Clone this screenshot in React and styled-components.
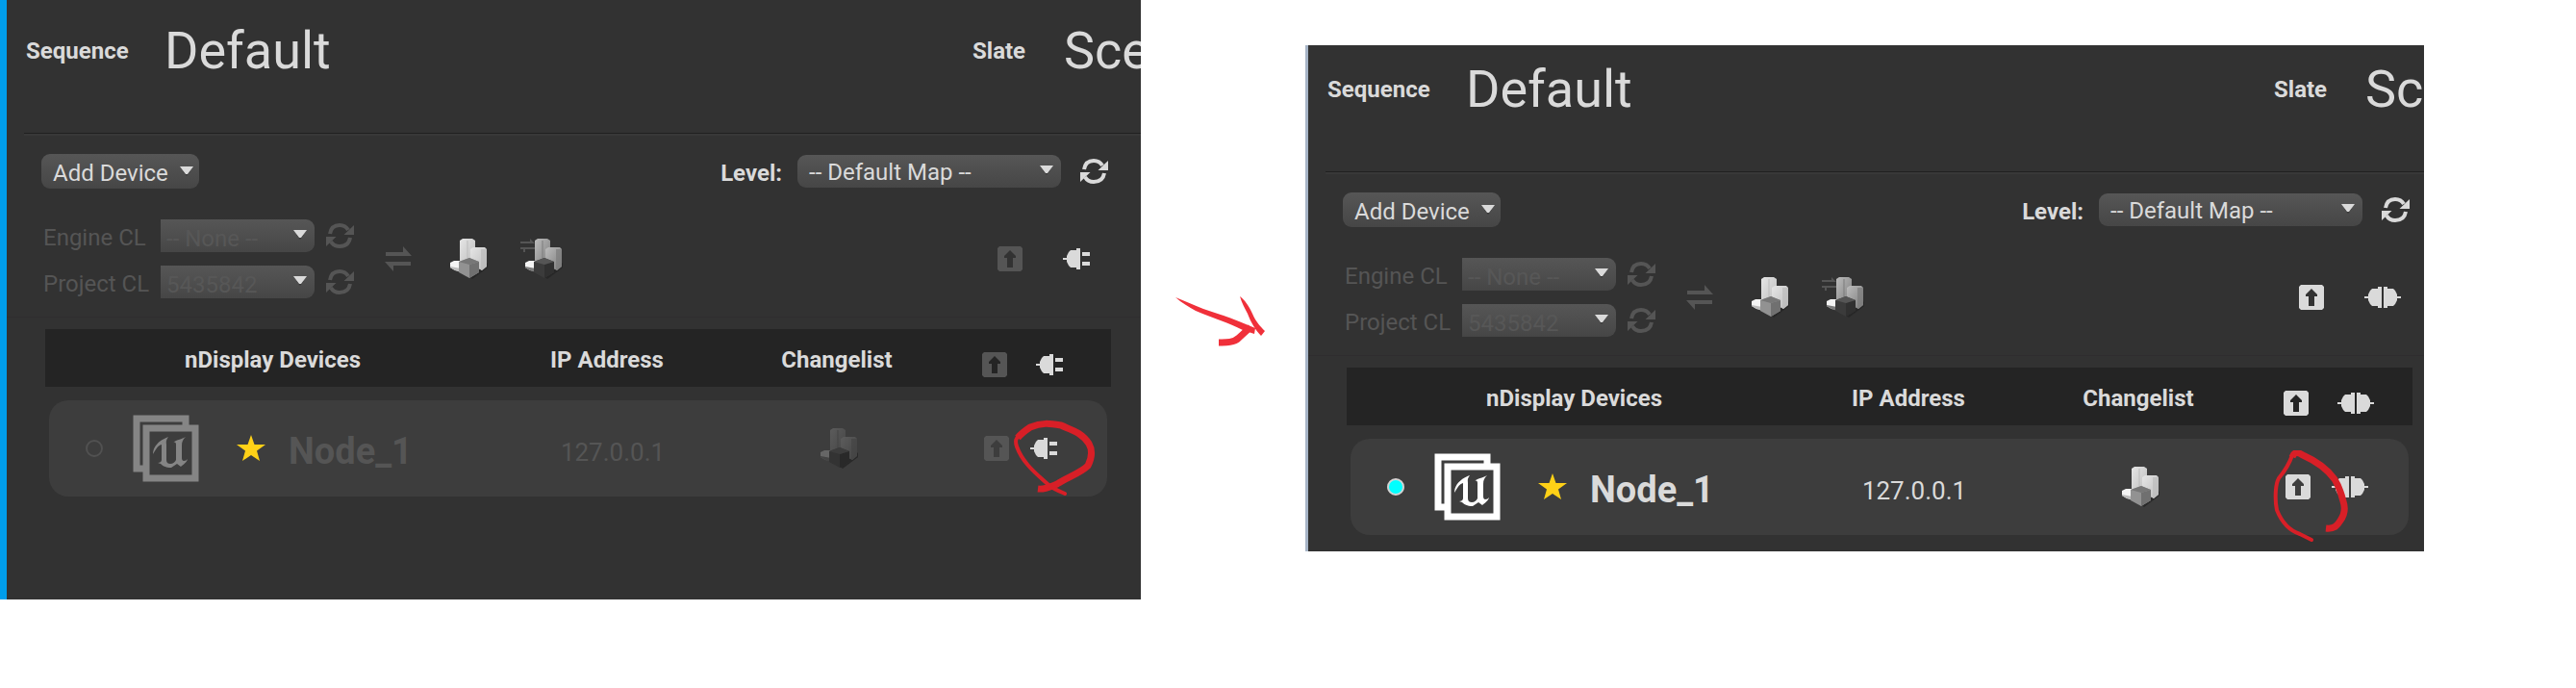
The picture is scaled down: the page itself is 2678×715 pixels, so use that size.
import React, { useId } from "react";
import styled, { createGlobalStyle } from "styled-components";

const GlobalStyle = createGlobalStyle`
  * { box-sizing: border-box; }
  body {
    margin: 0;
    background: #fff;
    font-family: Roboto, "Liberation Sans", sans-serif;
    font-size: 24px;
    color: #dadada;
  }
`;

const Page = styled.main`
  display: grid;
  grid-template-columns: 1186fr 171fr 1163fr 158fr;
  align-items: start;
`;

const Panel = styled.section`
  margin-top: ${(p) => (p.$lowered ? 40 : 0)}px;
  clip-path: inset(${(p) => (p.$lowered ? 7 : 0)}px 0 0 0);
  border-left: ${(p) => (p.$lowered ? "3px solid #a6b4c6" : "7px solid #009deb")};
  background: #323232;
  overflow: hidden;
`;

const Body = styled.div`
  margin-right: ${(p) => (p.$cropped ? -19 : 0)}px;
  padding-bottom: ${(p) => (p.$cropped ? 17 : 107)}px;
`;

const TopBar = styled.header`
  display: flex;
  margin-left: 18px;
  height: 141px;
  border-bottom: 2px solid #383838;
  box-shadow: inset 0 -1px #202020;
`;

const Field = styled.div`
  display: flex;
  align-items: center;
  height: 106px;
  padding-left: 2px;
  flex: ${(p) => (p.$end ? "0 0 177px" : "1 1 0")};
  min-width: 0;
`;

const FieldLabel = styled.label`
  flex: none;
  width: ${(p) => (p.$short ? 95 : 144)}px;
  font-weight: 700;
  line-height: 30px;
`;

const FieldInput = styled.input`
  flex: 1;
  width: 0;
  height: 72px;
  padding: 0;
  border: 0;
  background: none;
  color: inherit;
  font: 400 54px/72px Roboto, "Liberation Sans", sans-serif;
`;

const LevelBar = styled.div`
  display: flex;
  align-items: flex-start;
  padding: 19px 34px 0 36px;
`;

const AddButton = styled.button`
  display: flex;
  align-items: center;
  gap: 12px;
  height: 36px;
  padding: 4px 6px 0 12px;
  border: 0;
  border-radius: 9px;
  background: linear-gradient(#565656, #464646);
  color: inherit;
  font: inherit;
  line-height: 30px;
  white-space: nowrap;

  svg { margin-bottom: 4px; }
`;

const LevelGroup = styled.div`
  display: flex;
  align-items: center;
  height: 36px;
  margin-left: auto;
`;

const LevelLabel = styled.label`
  margin: 4px 16px 0 0;
  font-weight: 700;
`;

const SelectFrame = styled.span`
  display: grid;
  align-items: center;
  width: ${(p) => p.$width}px;
  height: 34px;
  border-radius: ${(p) => (p.$joined ? "0 9px 9px 0" : "9px")};
  background: linear-gradient(#565656, #464646);

  > * { grid-area: 1 / 1; }
  > svg { justify-self: end; margin: 0 8px 2px 0; }
`;

const SelectBox = styled.select`
  appearance: none;
  width: 100%;
  height: 34px;
  padding: ${(p) => (p.$joined ? "6px 28px 0 6px" : "2px 32px 0 12px")};
  border: 0;
  background: none;
  color: ${(p) => (p.$joined ? "#575757" : "#dadada")};
  font: inherit;
  opacity: 1;
`;

const IconButton = styled.button`
  position: relative;
  display: block;
  flex: none;
  width: ${(p) => p.$slot || "auto"};
  padding: 0;
  border: 0;
  background: none;
  color: ${(p) => (p.$dim ? "#555" : "#dadada")};

  svg { display: block; }
`;

const SyncBar = styled.div`
  display: flex;
  align-items: center;
  padding: 32px 43px 19px 38px;
  border-bottom: 1px solid #2f2d2f;
`;

const ChangelistGrid = styled.div`
  display: grid;
  grid-template-columns: 122px 160px 28px;
  row-gap: 14px;
  align-items: center;

  > button { margin-left: 12px; }
`;

const DimLabel = styled.label`
  padding-top: 4px;
  color: #555;
  line-height: 30px;
  white-space: nowrap;
`;

const SyncIcons = styled.div`
  display: flex;
  align-items: center;
  margin-left: 45px;

  > :nth-child(2) { margin: 0 34px 0 39px; }
`;

const Toggles = styled.div`
  display: flex;
  align-items: center;
  gap: ${(p) => p.$gap}px;
  margin-left: ${(p) => p.$left || "0"};
`;

const DeviceTable = styled.table`
  display: block;
  margin: 12px 31px 0 40px;

  thead, tbody { display: block; }
`;

const HeadRow = styled.tr`
  display: grid;
  grid-template-columns: 473fr 222fr 256fr 157fr;
  align-items: center;
  height: 60px;
  background: #242424;
`;

const DeviceRow = styled.tr`
  display: grid;
  grid-template-columns: 471fr 230fr 242fr 157fr;
  align-items: center;
  height: 100px;
  margin: 14px 4px 0;
  border-radius: 20px;
  background: #3d3d3d;
  color: ${(p) => (p.$on ? "#dadada" : "#555")};
`;

const HeadCell = styled.th`
  padding: 4px 0 0;
  font-weight: 700;
  text-align: center;
  white-space: nowrap;
`;

const ToggleHead = styled.th`
  padding: 14px 0 0 23px;
`;

const Cell = styled.td`
  display: flex;
  align-items: center;
  justify-content: ${(p) => (p.$left ? "flex-start" : "center")};
  padding: 0 0 0 ${(p) => p.$left || "0"};
`;

const Status = styled.span`
  width: 18px;
  height: 18px;
  border-radius: 50%;
  border: 2px solid ${(p) => (p.$on ? "#d2d2d2" : "#515151")};
  background: ${(p) => (p.$on ? "#00ffff" : "transparent")};
`;

const Logo = styled.svg`
  margin: 0 39px 0 30px;
  color: ${(p) => (p.$on ? "#fff" : "#858585")};
`;

const NodeName = styled.strong`
  margin-left: 24px;
  padding-top: 6px;
  font-size: 38px;
  line-height: 48px;
`;

const Address = styled.span`
  padding-top: 8px;
  font-size: 26px;
`;

const Scribble = styled.svg`
  position: absolute;
  z-index: 1;
  left: ${(p) => p.$x}px;
  top: ${(p) => p.$y}px;
  pointer-events: none;
`;

const ArrowGap = styled.div`
  display: flex;
  justify-content: center;
  padding: 308px 2px 0 0;
`;

const Caret = () => (
  <svg width="14" height="10" viewBox="0 0 14 10" aria-hidden="true">
    <path d="M3 5h8L7 10z" fill="#333" opacity=".7" />
    <path d="M0 0h14L8 8H6z" fill="#dadada" />
  </svg>
);

const RefreshIcon = () => (
  <svg width="29" height="28" viewBox="0 0 29 28" fill="none" aria-hidden="true">
    <path d="M4 12C5 6 8 3 14 3c4 0 7 1.500 9 5M25 16c-1 6-5 9-11 9-4 0-7-1.500-9-5" stroke="currentColor" strokeWidth="4" />
    <path d="M29 3v10H18.500zM0 25V15h10.500z" fill="currentColor" />
  </svg>
);

const SwapIcon = () => (
  <svg width="28" height="26" viewBox="0 0 28 26" fill="currentColor" aria-hidden="true">
    <path d="M1 6h18V0l9 10H1zM27 20H9v6L0 16h27z" />
  </svg>
);

const BoxesIcon = ({ tone = "bright", swap }) => {
  const id = useId();
  const [hi, lo, cubeTop, cubeL, cubeR] = {
    bright: ["#e6e6e6", "#bcbcbc", "#777", "#929292", "#707070"],
    mid: ["#bcbcbc", "#7c7c7c", "#555", "#3b3b3b", "#303030"],
    dark: ["#5c5c5c", "#444", "#3c3c3c", "#333", "#292929"],
  }[tone];
  const ball = tone === "dark" ? "#666" : "#f4f4f4";
  return (
    <svg width={swap ? 46 : 42} height="44" viewBox={swap ? "-4 0 46 44" : "0 0 42 44"} aria-hidden="true">
      <defs>
        <linearGradient id={id} x1="0" x2="1" y1="0" y2="1">
          <stop offset="0" stopColor={hi} />
          <stop offset="1" stopColor={lo} />
        </linearGradient>
      </defs>
      {swap && <path d="M-4 4H6V1l5 5H-4zM12 10H-4v2h3v3h2v-3h11z" fill="#555" />}
      <path d="M36 24l4 3v4l-16 12-4-3z" fill="#242424" opacity=".8" />
      <path d="M11 3l3-2h10l3 2v27H11z" fill={`url(#${id})`} />
      <path d="M18 3h2v24h-2z" fill={lo} opacity=".5" />
      <path d="M22 12l3-2h12l2 2v18l-5 4-12-6z" fill={`url(#${id})`} />
      <path d="M33 12h6v18l-5 4h-1z" fill={lo} opacity=".7" />
      <path d="M1 26l4-2h7v11l-6-1-5-3z" fill={ball} />
      <path d="M1 30l11 2v4l-6-2-5-3z" fill={lo} />
      <path d="M10 25l11-4 10 4v11l-10 6-11-6z" fill={cubeL} />
      <path d="M21 28l10-3v11l-10 6z" fill={cubeR} />
      <path d="M10 25l11-4 10 4-10 3z" fill={cubeTop} />
    </svg>
  );
};

const UpIcon = () => (
  <svg width="26" height="26" viewBox="0 0 26 26" aria-hidden="true">
    <path fill="currentColor" fillRule="evenodd" d="M2 0h22l2 2v22l-2 2H2l-2-2V2zM13 4l-6 6v2h3v10h6V12h3v-2z" />
  </svg>
);

const PlugIcon = ({ on }) => (
  <svg width={on ? 38 : 28} height="22" viewBox={on ? "0 0 38 22" : "0 0 28 22"} fill="currentColor" aria-hidden="true">
    <path d="M18 0v22h-4v-2H8l-2-2-2-4v-2H0v-2h4V8l2-4 2-2h6V0z" />
    {on ? (
      <path d="M20 0v22h4v-2h6l2-2 2-4v-2h4v-2h-4V8l-2-4-2-2h-6V0z" />
    ) : (
      <path d="M20 4h8v4h-8zM20 14h8v4h-8z" />
    )}
  </svg>
);

const StarIcon = () => (
  <svg width="30" height="28" viewBox="0 0 30 28" aria-hidden="true">
    <path d="M15 0l3.500 10H30l-9 6.500L24 27l-9-6-9 6 3-10.500L0 10h11.500z" fill="#ffd117" />
  </svg>
);

const DisplayLogo = ({ on }) => (
  <Logo $on={on} width="70" height="70" viewBox="0 0 70 70" fill="none" aria-hidden="true">
    <path d="M56 11V4H5v52h9" stroke="currentColor" strokeWidth="7" />
    <path d="M15 14h51v52H15z" stroke="currentColor" strokeWidth="7" />
    <path
      d="M22 41c0-7 5-14 16-18-3 4-2 6-2 8v16c0 3 2 4 4 4 3 0 5-2 6-4V31c0-2-1-3-3-2 3-3 8-3 13-6-3 3-4 5-4 9v13c0 2 1 3 2 3 2 0 3-1 4-2-1 4-5 6-7 8l-4-3-6 4c-6 0-9-2-11-4l-3-1c2 0 4-1 4-3V31c-4 1-6 5-9 10z"
      fill="currentColor"
    />
  </Logo>
);

const PlugScribble = () => (
  <Scribble $x={-21} $y={-21} width="96" height="90" viewBox="0 0 96 90" fill="none" stroke="#d81f27" aria-hidden="true">
    <path d="M29 74c8 1 15-3 20-5 10-7 24-11 32-19 4-8 5-16 1-23-8-12-18-14-29-19-12-2-20-3-32 2-6 4-9 6-13 11" strokeWidth="7" />
    <path d="M11 17c-5 4-6 7-4 13 6 17 20 28 32 39 5 5 10 6 18 10" strokeWidth="4" strokeLinecap="round" />
  </Scribble>
);

const UpScribble = () => (
  <Scribble $x={-14} $y={-25} width="84" height="98" viewBox="0 0 84 98" fill="none" stroke="#d81f27" aria-hidden="true">
    <path d="M56 81c9 1 12-3 15-8 5-7 5-14 3-20-2-8-4-15-9-23C55 16 41 9 32 5c-6-4-9-3-11 2" strokeWidth="7" />
    <path d="M21 5c-4 12-9 18-14 24-4 7-4 24-2 33 6 15 15 22 24 25l12 6" strokeWidth="4" strokeLinecap="round" />
  </Scribble>
);

const Chooser = ({ id, width, joined, value }) => (
  <SelectFrame $width={width} $joined={joined}>
    <SelectBox id={id} $joined={joined} disabled={joined}>
      <option>{value}</option>
    </SelectBox>
    <Caret />
  </SelectFrame>
);

function Switchboard({ connected, slate }) {
  const id = useId();
  return (
    <Panel $lowered={connected}>
      <Body $cropped={connected}>
        <TopBar>
          <Field>
            <FieldLabel htmlFor={id + "seq"}>Sequence</FieldLabel>
            <FieldInput id={id + "seq"} defaultValue="Default" />
          </Field>
          <Field $end>
            <FieldLabel $short htmlFor={id + "slate"}>Slate</FieldLabel>
            <FieldInput id={id + "slate"} defaultValue={slate} />
          </Field>
        </TopBar>
        <LevelBar>
          <AddButton>Add Device<Caret /></AddButton>
          <LevelGroup>
            <LevelLabel htmlFor={id + "level"}>Level:</LevelLabel>
            <Chooser id={id + "level"} width={274} value="-- Default Map --" />
            <Toggles $left="20px"><IconButton aria-label="Refresh levels"><RefreshIcon /></IconButton></Toggles>
          </LevelGroup>
        </LevelBar>
        <SyncBar>
          <ChangelistGrid>
            <DimLabel htmlFor={id + "engine"}>Engine CL</DimLabel>
            <Chooser id={id + "engine"} width={160} joined value="-- None --" />
            <IconButton $dim aria-label="Refresh engine"><RefreshIcon /></IconButton>
            <DimLabel htmlFor={id + "project"}>Project CL</DimLabel>
            <Chooser id={id + "project"} width={160} joined value="5435842" />
            <IconButton $dim aria-label="Refresh project"><RefreshIcon /></IconButton>
          </ChangelistGrid>
          <SyncIcons>
            <IconButton $dim aria-label="Sync"><SwapIcon /></IconButton>
            <IconButton $slot="40px" aria-label="Build"><BoxesIcon /></IconButton>
            <IconButton aria-label="Sync and build"><BoxesIcon tone="mid" swap /></IconButton>
          </SyncIcons>
          <Toggles $gap={42} $left="auto">
            <IconButton $dim={!connected} aria-label="Start all"><UpIcon /></IconButton>
            <IconButton $slot="38px" aria-label="Connect all"><PlugIcon on={connected} /></IconButton>
          </Toggles>
        </SyncBar>
        <DeviceTable>
          <thead>
            <HeadRow>
              <HeadCell>nDisplay Devices</HeadCell>
              <HeadCell>IP Address</HeadCell>
              <HeadCell>Changelist</HeadCell>
              <ToggleHead>
                <Toggles $gap={30}>
                  <IconButton $dim={!connected} aria-label="Start group"><UpIcon /></IconButton>
                  <IconButton aria-label="Connect group"><PlugIcon on={connected} /></IconButton>
                </Toggles>
              </ToggleHead>
            </HeadRow>
          </thead>
          <tbody>
            <DeviceRow $on={connected}>
              <Cell $left="38px">
                <Status $on={connected} />
                <DisplayLogo on={connected} />
                <StarIcon />
                <NodeName>Node_1</NodeName>
              </Cell>
              <Cell><Address>127.0.0.1</Address></Cell>
              <Cell><BoxesIcon tone={connected ? "bright" : "dark"} /></Cell>
              <Cell $left="29px">
                <Toggles $gap={22}>
                  <IconButton $dim={!connected} aria-label="Start Node_1">
                    <UpIcon />
                    {connected && <UpScribble />}
                  </IconButton>
                  <IconButton aria-label="Connect Node_1">
                    <PlugIcon on={connected} />
                    {!connected && <PlugScribble />}
                  </IconButton>
                </Toggles>
              </Cell>
            </DeviceRow>
          </tbody>
        </DeviceTable>
      </Body>
    </Panel>
  );
}

export default function App() {
  return (
    <>
      <GlobalStyle />
      <Page>
        <Switchboard slate="Sce" />
        <ArrowGap>
          <svg width="98" height="54" viewBox="0 0 98 54" aria-hidden="true">
            <g fill="#f0303a">
              <path d="M0 1c10 4 19 8 29 12 12 4 25 8 37 13l17 7-1 6-12-4C52 26 37 22 21 15 14 11 7 7 0 1z" />
              <path d="M67 0c5 4 9 9 13 18 4 9 8 13 13 18l-4 5C83 35 78 26 75 18 72 12 69 7 67 0z" />
            </g>
            <path d="M45 48c8 0 16 0 21-5l12-11" fill="none" stroke="#f0303a" strokeWidth="7" />
          </svg>
        </ArrowGap>
        <Switchboard connected slate="Sc" />
      </Page>
    </>
  );
}
